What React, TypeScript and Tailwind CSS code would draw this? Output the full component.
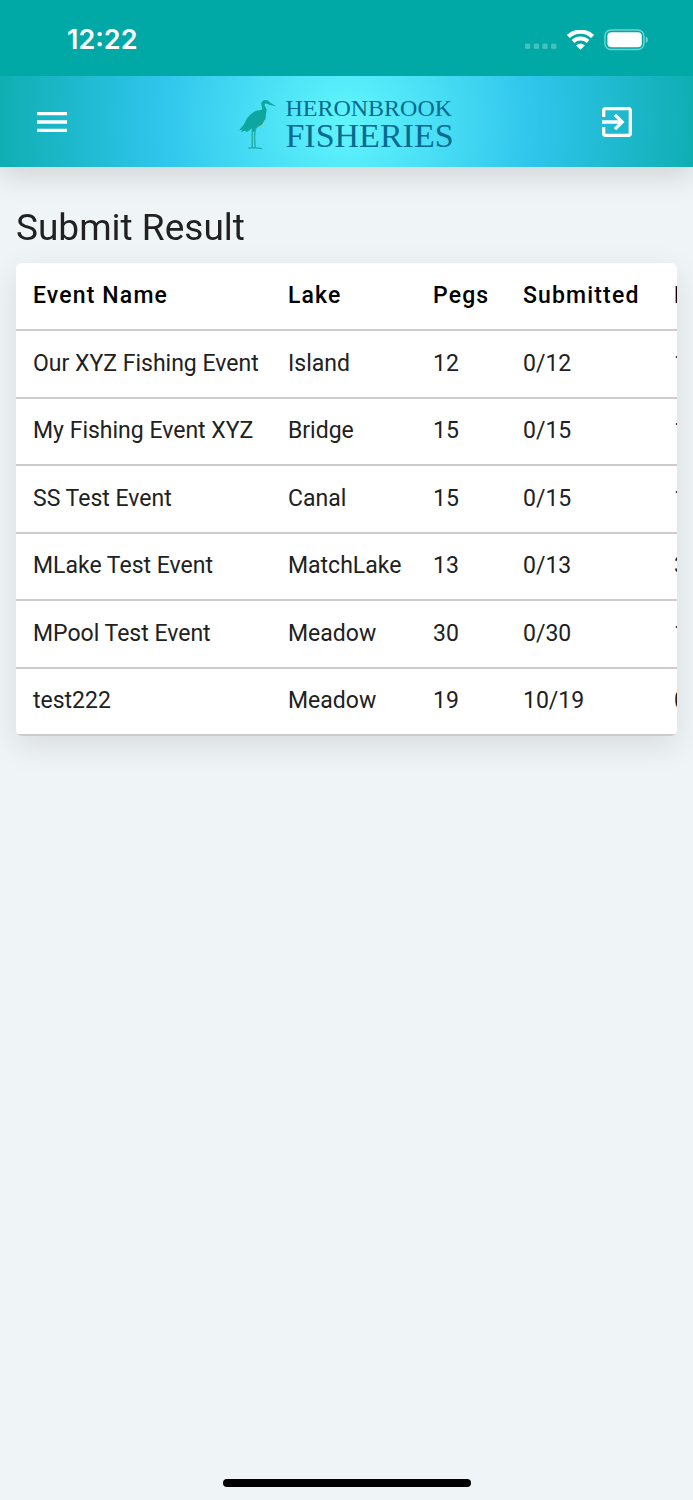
import { type FC } from "react";

type EventRow = {
  name: string;
  lake: string;
  pegs: number;
  submitted: string;
  date: string;
};

const columns = [
  { label: "Event Name", width: "w-[255px]" },
  { label: "Lake", width: "w-[145px]" },
  { label: "Pegs", width: "w-[90px]" },
  { label: "Submitted", width: "w-[151px]" },
  { label: "Date", width: "w-[150px]" },
];

const events: EventRow[] = [
  { name: "Our XYZ Fishing Event", lake: "Island", pegs: 12, submitted: "0/12", date: "10/11/2023" },
  { name: "My Fishing Event XYZ", lake: "Bridge", pegs: 15, submitted: "0/15", date: "12/11/2023" },
  { name: "SS Test Event", lake: "Canal", pegs: 15, submitted: "0/15", date: "15/11/2023" },
  { name: "MLake Test Event", lake: "MatchLake", pegs: 13, submitted: "0/13", date: "30/11/2023" },
  { name: "MPool Test Event", lake: "Meadow", pegs: 30, submitted: "0/30", date: "18/11/2023" },
  { name: "test222", lake: "Meadow", pegs: 19, submitted: "10/19", date: "06/11/2023" },
];

const StatusBar: FC = () => (
  <div className="relative z-10 flex h-[76px] items-center justify-between bg-[#00a9a5] pt-1 pr-11 pl-[67px] text-white">
    <span className="font-['Inter',sans-serif] text-[27px] font-semibold">12:22</span>
    <div className="flex items-center gap-[10px]">
      <svg width="32" height="22" viewBox="0 0 32 22" fill="#fff" fillOpacity="0.27">
        <rect x="0" y="14.5" width="5.4" height="5.4" rx="1.6" />
        <rect x="8.7" y="14.5" width="5.4" height="5.4" rx="1.6" />
        <rect x="17.3" y="14.5" width="5.4" height="5.4" rx="1.6" />
        <rect x="26" y="14.5" width="5.4" height="5.4" rx="1.6" />
      </svg>
      <svg width="27" height="21" viewBox="0 0 27 21" fill="none" stroke="#fff">
        <path d="M1.4 6.4C8.2 0 18.8 0 25.6 6.4" strokeWidth="4.2" />
        <path d="M6 11.5C10.2 7.6 16.8 7.6 21 11.5" strokeWidth="4" />
        <path d="M13.5 19.8 9.1 15.4C11.6 13.2 15.4 13.2 17.9 15.4Z" fill="#fff" stroke="none" />
      </svg>
      <svg width="45" height="22" viewBox="0 0 45 22" fill="none">
        <rect x="0.9" y="0.9" width="39" height="19.6" rx="6" stroke="#fff" strokeOpacity="0.45" strokeWidth="1.5" />
        <rect x="3.4" y="3.2" width="34.4" height="15" rx="4" fill="#fff" />
        <path d="M41.8 7.4C44.4 8.4 44.4 13 41.8 14Z" fill="#fff" fillOpacity="0.5" />
      </svg>
    </div>
  </div>
);

const Logo: FC = () => (
  <a
    href="#home"
    aria-label="Heronbrook Fisheries"
    className="flex items-center gap-2 pt-1 font-['Liberation_Serif',serif] text-[#066b8f]"
  >
    <svg width="38" height="52" viewBox="0 0 38 52" fill="none">
      <path
        d="M37.5 8.6 30.6 4.2C29.4 1.6 24.6 1 22.6 4.4 21.6 7 23.6 9.4 23 11.4 21.6 12.6 17.6 11.8 14 14.4 9.4 17.6 6.8 21.4 5.6 25.2 4.2 28 1.2 29.8.3 32.6L3 31.8 2.2 34.4 5.4 32.4 7.8 34 11.2 31.8 12.6 30 13 34 15.6 34 16.8 30.2C19.6 30 23.6 28.2 25.4 24.4 27.2 20.4 26.6 17 27.2 14.4 28.2 12 27.4 10 26 8.2 25.2 6.8 25.8 5.8 27 5.6 28.4 5.4 29.4 6.8 31 7Z"
        fill="#0ea69f"
      />
      <path d="M13.4 32C13 38 13.6 44 13.2 49.4M17 30.5C14.6 35 15.6 43 16.2 49.4M9.4 50.2 14.6 49.6 23 50.6" stroke="#1faea7" strokeWidth="1.4" />
      <path d="M25.8 22.4C25 25.6 22 28.6 18.6 29.6" stroke="#7cd9cf" strokeWidth="1.2" />
    </svg>
    <span className="flex flex-col">
      <span className="text-[24px] leading-[25px]">HERONBROOK</span>
      <span className="text-[34px] leading-[30px]">FISHERIES</span>
    </span>
  </a>
);

const Header: FC = () => (
  <header className="grid h-[91px] grid-cols-[1fr_auto_1fr] items-center bg-[radial-gradient(circle,#61f6fd_0%,#2fc5ec_54%,#0faeb2_100%)] px-8 shadow-[0_8px_28px_rgba(0,0,0,0.14)]">
    <button type="button" aria-label="Open menu" className="justify-self-start text-white">
      <svg width="40" height="40" viewBox="0 0 24 24" fill="currentColor">
        <path d="M3 18h18v-2H3v2zm0-5h18v-2H3v2zm0-7v2h18V6H3z" />
      </svg>
    </button>
    <Logo />
    <button type="button" aria-label="Log out" className="justify-self-end pr-6 text-white">
      <svg width="40" height="40" viewBox="0 0 24 24" fill="currentColor">
        <path d="M10.09 15.59 11.5 17l5-5-5-5-1.41 1.41L12.67 11H3v2h9.67l-2.58 2.59zM19 3H5c-1.11 0-2 .9-2 2v4h2V5h14v14H5v-4H3v4c0 1.1.89 2 2 2h14c1.1 0 2-.9 2-2V5c0-1.1-.9-2-2-2z" />
      </svg>
    </button>
  </header>
);

const ResultsTable: FC = () => (
  <div className="overflow-x-auto rounded-md bg-white shadow-[0_10px_32px_rgba(0,0,0,0.1)] [scrollbar-width:none]">
    <table className="w-full min-w-[791px] table-fixed text-left text-[23px] whitespace-nowrap text-[#212121]">
      <thead>
        <tr className="h-[67px] border-b-2 border-[#cccccc] text-black">
          {columns.map((column) => (
            <th
              key={column.label}
              scope="col"
              className={`${column.width} pl-[17px] font-medium tracking-wider`}
            >
              {column.label}
            </th>
          ))}
        </tr>
      </thead>
      <tbody>
        {events.map((event) => (
          <tr
            key={event.name}
            className="h-[68px] border-b-2 border-[#cccccc] even:h-[67px]"
          >
            <td className="pl-[17px]">{event.name}</td>
            <td className="pl-[17px]">{event.lake}</td>
            <td className="pl-[17px]">{event.pegs}</td>
            <td className="pl-[17px]">{event.submitted}</td>
            <td className="pl-[17px]">{event.date}</td>
          </tr>
        ))}
      </tbody>
    </table>
  </div>
);

const App: FC = () => (
  <div className="flex min-h-screen flex-col bg-[#eff4f7] font-['Roboto',sans-serif]">
    <StatusBar />
    <Header />
    <main className="flex-1 px-4 pt-[37px]">
      <h1 className="mb-[11px] text-[37px] leading-[48px] text-[#212121]">Submit Result</h1>
      <ResultsTable />
    </main>
    <div className="flex justify-center pb-[13px]">
      <div className="h-2 w-[248px] rounded-full bg-black" />
    </div>
  </div>
);

export default App;
